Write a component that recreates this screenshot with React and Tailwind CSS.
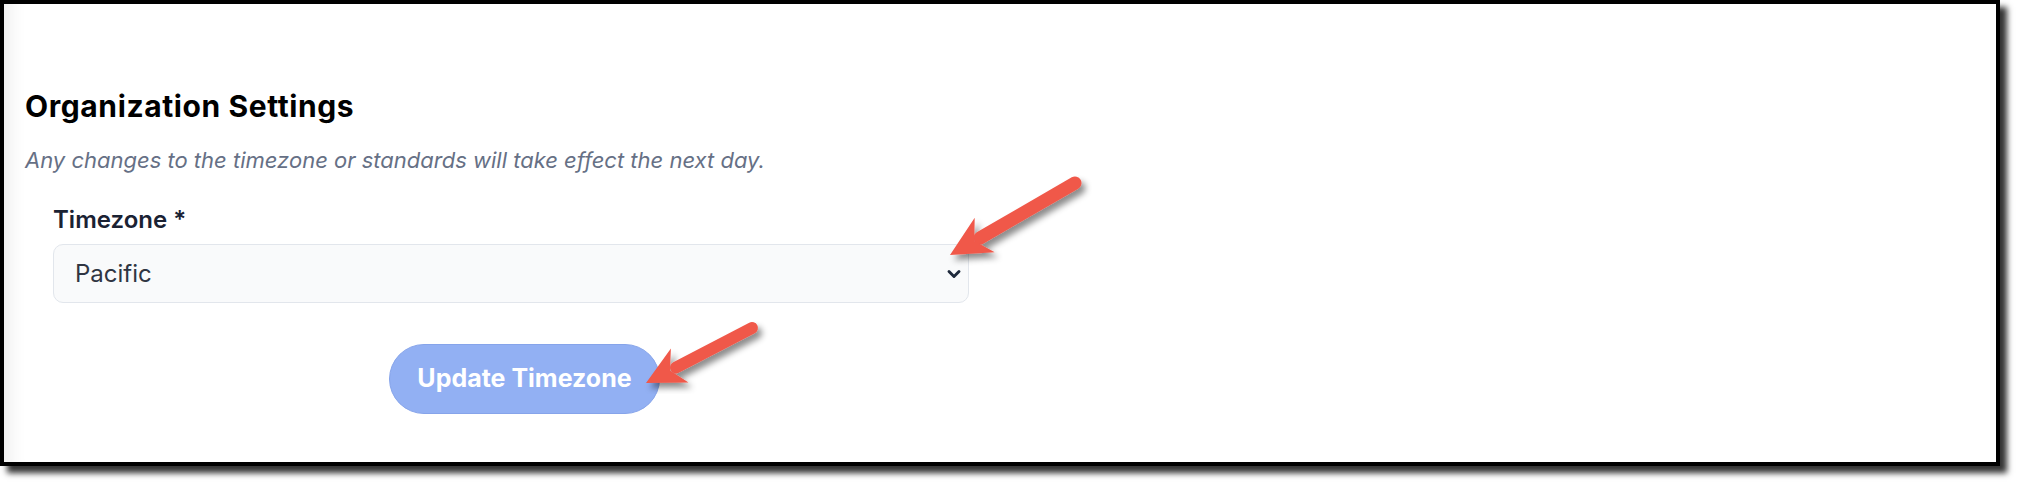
import { ChevronDown } from 'lucide-react';

// red annotation arrows drawn over the page
const Arrow = ({ tail, shaftEnd, tip, wingA, wingB, notch, width }) => (
  <g filter="url(#arrowShadow)">
    <line
      x1={tail[0]}
      y1={tail[1]}
      x2={shaftEnd[0]}
      y2={shaftEnd[1]}
      stroke="#f0584a"
      strokeWidth={width}
      strokeLinecap="round"
    />
    <polygon
      points={`${tip[0]},${tip[1]} ${wingA[0]},${wingA[1]} ${notch[0]},${notch[1]} ${wingB[0]},${wingB[1]}`}
      fill="#f0584a"
    />
  </g>
);

const App = () => {
  return (
    <div className="relative w-[2020px] h-[486px] bg-white font-['Inter',sans-serif]">
      <div className="w-[2000px] h-[466px] border-4 border-black bg-white shadow-[7px_7px_6px_rgba(0,0,0,0.8),inset_22px_0_18px_-16px_rgba(0,0,0,0.07)] pl-[21px] pt-[85px]">
        <h2 className="text-[30px] leading-[34px] font-bold tracking-[0.6px] text-black">Organization Settings</h2>
        <p className="mt-[24px] text-[22px] leading-[26px] italic text-[#667085]">
          Any changes to the timezone or standards will take effect the next day.
        </p>

        <div className="ml-[28px] mt-[32px] w-[916px]">
          <label className="block text-[24px] leading-[30px] font-semibold text-[#1a2233]">Timezone *</label>
          <div className="mt-[9px] h-[59px] flex items-center justify-between rounded-[10px] border border-[#e2e6ec] bg-[#f9fafb] pl-[21px] pr-[4px]">
            <span className="text-[24px] text-[#2f3542]">Pacific</span>
            <ChevronDown size={20} strokeWidth={3.5} className="text-[#1e293b]" />
          </div>
          <button
            type="button"
            className="block mt-[41px] ml-[336px] h-[70px] w-[271px] rounded-full border border-[#86a4ea] bg-[#92b0f3] text-[25px] font-bold text-white"
          >
            Update Timezone
          </button>
        </div>
      </div>

      <svg className="absolute inset-0 pointer-events-none" width="2020" height="486" viewBox="0 0 2020 486">
        <defs>
          <filter id="arrowShadow" x="-20%" y="-20%" width="140%" height="140%">
            <feDropShadow dx="4" dy="5" stdDeviation="3" floodColor="#000" floodOpacity="0.45" />
          </filter>
        </defs>
        <Arrow
          tail={[1075, 183]}
          shaftEnd={[980, 238]}
          tip={[950, 255]}
          wingA={[994.7, 252.3]}
          wingB={[974.7, 217.7]}
          notch={[974.3, 241]}
          width={13}
        />
        <Arrow
          tail={[752, 328]}
          shaftEnd={[676, 367.5]}
          tip={[646, 383]}
          wingA={[688.5, 382.4]}
          wingB={[670.9, 348.6]}
          notch={[670, 370.6]}
          width={12}
        />
      </svg>
    </div>
  );
};

export default App;
